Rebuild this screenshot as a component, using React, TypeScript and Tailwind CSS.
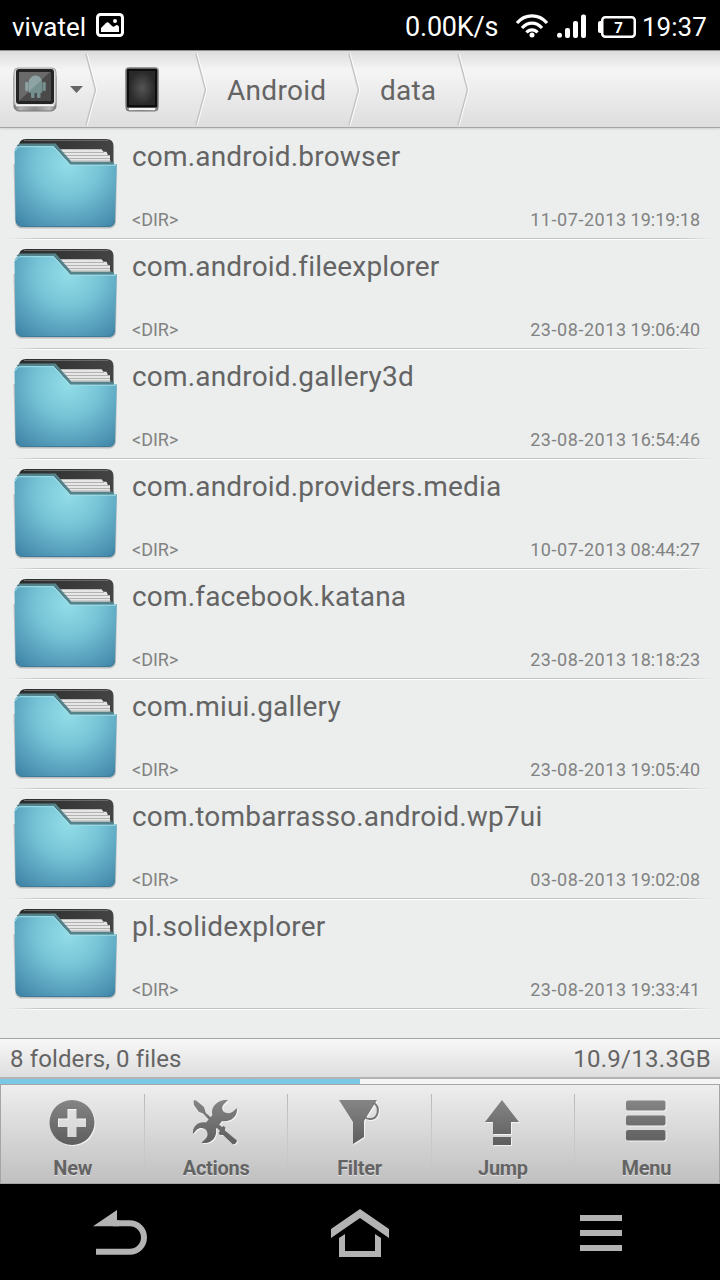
import type { ReactNode } from "react";

interface Folder {
  name: string;
  date: string;
  time: string;
}

const FOLDERS: Folder[] = [
  { name: "com.android.browser", date: "11-07-2013", time: "19:19:18" },
  { name: "com.android.fileexplorer", date: "23-08-2013", time: "19:06:40" },
  { name: "com.android.gallery3d", date: "23-08-2013", time: "16:54:46" },
  { name: "com.android.providers.media", date: "10-07-2013", time: "08:44:27" },
  { name: "com.facebook.katana", date: "23-08-2013", time: "18:18:23" },
  { name: "com.miui.gallery", date: "23-08-2013", time: "19:05:40" },
  { name: "com.tombarrasso.android.wp7ui", date: "03-08-2013", time: "19:02:08" },
  { name: "pl.solidexplorer", date: "23-08-2013", time: "19:33:41" },
];

// Gradients shared by all the icons on the page
function IconDefs() {
  return (
    <svg className="absolute h-0 w-0" aria-hidden="true">
      <defs>
        <radialGradient id="folder-front" gradientUnits="userSpaceOnUse" cx="68" cy="34" r="78">
          <stop offset="0" stopColor="#93dde8" />
          <stop offset="0.4" stopColor="#78c5d7" />
          <stop offset="0.75" stopColor="#579fbc" />
          <stop offset="1" stopColor="#4084a6" />
        </radialGradient>
        <linearGradient id="folder-back" x1="0" y1="0" x2="1" y2="0">
          <stop offset="0" stopColor="#2b2b2b" />
          <stop offset="1" stopColor="#444" />
        </linearGradient>
        <linearGradient id="tool" gradientUnits="userSpaceOnUse" x1="0" y1="0" x2="0" y2="46">
          <stop offset="0" stopColor="#858585" />
          <stop offset="1" stopColor="#5c5c5c" />
        </linearGradient>
        <linearGradient id="metal" x1="0" y1="0" x2="1" y2="0">
          <stop offset="0" stopColor="#777" />
          <stop offset="0.15" stopColor="#b4b4b4" />
          <stop offset="0.5" stopColor="#8d8d8d" />
          <stop offset="0.85" stopColor="#bcbcbc" />
          <stop offset="1" stopColor="#777" />
        </linearGradient>
        <radialGradient id="screen">
          <stop offset="0" stopColor="#555" />
          <stop offset="1" stopColor="#292929" />
        </radialGradient>
      </defs>
    </svg>
  );
}

function StatusBar() {
  return (
    <div className="flex h-[50px] shrink-0 items-center bg-black px-3 leading-[50px] text-white">
      <span className="w-[84px] pt-[3px] text-[26px] whitespace-nowrap">vivatel</span>
      <svg className="h-6 w-7" viewBox="0 0 28 24">
        <rect x="1.5" y="1.5" width="25" height="21" rx="3" fill="none" stroke="#fff" strokeWidth="3" />
        <path d="M5 19v-4l5-5c1-1 2-1 3 0l3 3c1 1 2 1 3 0 2-2 3-1 4 1v5z" fill="#fff" />
        <circle cx="19" cy="8" r="2" fill="#fff" />
      </svg>
      <span className="ml-auto w-[111px] pt-[3px] text-[27px] tracking-[-0.2px] whitespace-nowrap">0.00K/s</span>
      <svg className="mt-0.5 h-6 w-8" viewBox="0 0 32 24">
        <g fill="none" stroke="#fff" strokeWidth="3.2">
          <path d="M1 9C9-.5 23-.5 31 9" />
          <path d="M6 14c6-6.500 14-6.500 20 0" />
          <path d="M10.500 18.500c3-3.500 8-3.500 11 0" />
        </g>
        <circle cx="16" cy="21" r="2.500" fill="#fff" />
      </svg>
      <svg className="mt-0.5 ml-[9px] h-6 w-[29px]" viewBox="0 0 29 24">
        <g fill="#fff">
          <circle cx="2.500" cy="21.200" r="2.500" />
          <rect x="8" y="14" width="5" height="10" rx="2" />
          <rect x="16" y="7" width="5" height="17" rx="2" />
          <rect x="24" y="0.500" width="5" height="23.500" rx="2" />
        </g>
      </svg>
      <svg className="mt-[3px] ml-3 h-[22px] w-[38px]" viewBox="0 0 38 22">
        <rect x="4.250" y="1.250" width="32.500" height="19.500" rx="3" fill="none" stroke="#fff" strokeWidth="2.500" />
        <path d="M4 5H2a2 2 0 00-2 2v8a2 2 0 002 2h2z" fill="#fff" />
        <text x="20.500" y="16.500" textAnchor="middle" fill="#fff" fontSize="15" fontWeight="700">7</text>
      </svg>
      <span className="ml-1.5 w-[66px] pt-[3px] text-[26px] whitespace-nowrap">19:37</span>
    </div>
  );
}

function Chevron() {
  return (
    <svg className="h-[74px] w-3 shrink-0" viewBox="0 0 12 74" fill="none">
      <path d="M2 2l9.500 36L2 73" stroke="#fff" strokeWidth="1.500" />
      <path d="M1 2l9.500 36L1 73" stroke="#c4c4c4" strokeWidth="1.500" />
    </svg>
  );
}

function Breadcrumbs() {
  return (
    <div className="flex h-[78px] shrink-0 items-center border-t border-b border-t-[#8c8c8c] border-b-[#a5a5a5] bg-linear-to-b from-[#dcdcdc] via-[#f5f5f5] via-25% to-[#dedede] pl-[13px] text-[28px] text-[#646464] shadow-[0_1px_2px_rgba(0,0,0,0.12)]">
      <svg className="mt-0.5 h-[46px] w-[44px] shrink-0" viewBox="0 0 44 46">
        <rect x="1" y="5" width="42" height="39" rx="5" fill="url(#metal)" stroke="#777" />
        <rect x="1" y="1" width="42" height="38" rx="4" fill="#dadada" stroke="#a2a2a2" />
        <path d="M3 38.500h38" stroke="#f6f6f6" strokeWidth="1.500" />
        <rect x="3" y="2" width="38" height="35" rx="3" fill="#242424" />
        <rect x="6" y="5" width="32" height="29" fill="#4a4a4a" />
        <g fill="#769090">
          <path d="M15.500 16a7 7.500 0 0114 0zM15.500 16h14v8a2 2 0 01-2 2h-10a2 2 0 01-2-2z" />
          <rect x="12.200" y="15" width="3" height="9" rx="1.200" />
          <rect x="29.800" y="15" width="3" height="9" rx="1.200" />
          <rect x="18" y="25" width="3.500" height="6" rx="1" />
          <rect x="24" y="25" width="3.500" height="6" rx="1" />
        </g>
        <path d="M6 5h31L6 34z" fill="#fff" opacity="0.18" />
      </svg>
      <svg className="ml-[13px] h-[7px] w-[13px] shrink-0" viewBox="0 0 13 7">
        <path d="M0 0h13L6.500 7z" fill="#666" />
      </svg>
      <div className="ml-0.5"><Chevron /></div>
      <svg className="mt-px ml-[28px] h-[46px] w-[34px] shrink-0" viewBox="0 0 34 46">
        <rect x="1" y="5" width="32" height="39" rx="3" fill="url(#metal)" stroke="#777" />
        <rect x="4" y="40" width="26" height="3" fill="#f4f4f4" />
        <rect x="0.500" y="0.500" width="33" height="40" rx="3" fill="#c4c4c4" stroke="#999" />
        <rect x="1.500" y="1.500" width="31" height="39" rx="1.500" fill="#0e0e0e" />
        <rect x="4" y="4" width="26" height="34" fill="url(#screen)" />
      </svg>
      <div className="ml-9"><Chevron /></div>
      <span className="ml-[20px] w-[101px] pt-[3px] tracking-[0.3px] whitespace-nowrap">Android</span>
      <div className="ml-5"><Chevron /></div>
      <span className="ml-[20px] w-[57px] pt-[3px] tracking-[0.2px] whitespace-nowrap">data</span>
      <div className="ml-5"><Chevron /></div>
    </div>
  );
}

function FolderIcon() {
  return (
    <svg className="h-[108px] w-[132px] shrink-0" viewBox="0 0 132 108">
      <path d="M13.500 34h103.500l-1 58a7 7 0 01-7 6.500H22a7 7 0 01-7-6.500z" fill="#000" opacity="0.2" />
      <path d="M19 16q0-7 7-7h80q7.500 0 7.500 7v24H19z" fill="url(#folder-back)" />
      <path d="M24 10.500h84" stroke="#686868" />
      <path d="M59 19.200h42.500l2 2.500h3l1.500 3.500h2v7H70z" fill="#e6e6e6" />
      <path d="M62 22.500h42M65 25.500h44M67 28.500h43M69 31h42" stroke="#a5a5a5" strokeWidth="0.800" />
      <path d="M17.500 16.500q1.500-1.800 4-1.800H55L71 33h43" fill="none" stroke="#55838c" strokeWidth="2.500" />
      <path d="M21 16h33l16.500 18.500h46.300L115 91q-.4 6-7 6H23q-7 0-7.500-7L14.500 22q0-6 6.500-6z" fill="url(#folder-front)" />
      <path d="M15.500 21q1-4.300 5.500-4.300h32.500L70 35.200h46" fill="none" stroke="#9fe0ea" />
      <path d="M16.500 91q1 5.500 7 5.500h84q6 0 7-6" fill="none" stroke="#3d7b98" />
    </svg>
  );
}

function FolderRow({ folder }: { folder: Folder }) {
  return (
    <li className="h-[110px]">
      <div className="flex h-[108px]">
        <FolderIcon />
        <div className="flex min-w-0 flex-1 flex-col justify-between pt-[11px] pr-5 pb-[7px]">
          <span className="text-[28px] leading-8 tracking-[0.18px] whitespace-nowrap text-[#646464]">{folder.name}</span>
          <div className="flex items-center text-[18px] leading-[22px] whitespace-nowrap text-[#828282]">
            <span className="mr-auto">&lt;DIR&gt;</span>
            <span className="tracking-[0.55px]">{folder.date}</span>
            <span className="ml-1">{folder.time}</span>
          </div>
        </div>
      </div>
      <div className="mx-2 h-px bg-[linear-gradient(90deg,transparent,#bfc1c0_5%,#bfc1c0_95%,transparent)]" />
      <div className="mx-2 h-px bg-[linear-gradient(90deg,transparent,#fff_5%,#fff_95%,transparent)]" />
    </li>
  );
}

function StorageBar() {
  return (
    <>
      <div className="flex h-[39px] shrink-0 items-center justify-between border-t border-[#a5a5a5] bg-linear-to-b from-[#f8f8f8] to-[#dedede] px-2.5 pt-0.5 text-[24px] text-[#646464]">
        <span className="tracking-[0.12px]">8 folders, 0 files</span>
        <span className="-mr-px tracking-[0.27px]">10.9/13.3GB</span>
      </div>
      <div className="h-[7px] shrink-0 border-t-2 border-[#b4b4b4] bg-[#f5f5f5]">
        <div className="h-full w-1/2 bg-[#7bc8e6]" />
      </div>
    </>
  );
}

function ToolButton({ label, children }: { label: string; children: ReactNode }) {
  return (
    <button className="relative flex flex-1 flex-col items-center pt-[15px] text-[20px] leading-6 font-bold text-[#646464] [text-shadow:0_1px_0_rgba(255,255,255,0.5)] not-first:before:absolute not-first:before:top-[9px] not-first:before:left-[0.5px] not-first:before:h-20 not-first:before:w-px not-first:before:bg-linear-to-b not-first:before:from-[#b8b8b8] not-first:before:to-transparent">
      <svg className="h-[46px] w-[46px] overflow-visible drop-shadow-[1px_1px_0_rgba(255,255,255,0.7)]" viewBox="0 0 46 46" fill="url(#tool)">
        {children}
      </svg>
      <span className="mt-[10px] ml-0.5 tracking-[-0.3px]">{label}</span>
    </button>
  );
}

function Toolbar() {
  return (
    <div className="flex h-[100px] shrink-0 border-y border-[#a5a5a5] bg-linear-to-b from-[#eeeeee] to-[#c0c0c0] pr-[3px] shadow-[inset_1px_0_0_#a5a5a5,inset_-1px_0_0_#a5a5a5]">
      <ToolButton label="New">
        <path fillRule="evenodd" d="M23 0a22.500 22.500 0 110 45 22.500 22.500 0 010-45zM18.500 9v9.500H9V27h9.500v10h9V27H37v-8.500h-9.500V9z" />
      </ToolButton>
      <ToolButton label="Actions">
        <path d="M1.500 0.500Q4-.5 6 2l6 5 2 6 9 8 7 6 1.500-1 2 1.500-.5 3L45 40.500q-.5 3.500-4 4L31 35l-3 0-1.500-2 1.500-2-9-9-8-8.500L7 12 2 5z" />
        <path d="M36 0C26-1 18 7 20.500 15L14 22.500C7 21 0 26 1 34l3.500-4c3-3 8-2.500 10 .500 2 4 1 6-1 8.500l-4 3.500C18 45 25.500 38 24 29l6-8c8 1.500 16-4 15-13l-4 3.500c-3 2.500-7 2-9.500 0-2-2-1.500-5 0-7z" />
      </ToolButton>
      <ToolButton label="Filter">
        <path d="M3 0h38L28 21v16l-11 7V22z" />
        <path d="M38 3c6 4 5 15-3 16-3 .5-5-.5-6.500-2.500" fill="none" stroke="#777" strokeWidth="2" />
      </ToolButton>
      <ToolButton label="Jump">
        <path d="M23 0l17 22h-8v12H14V22H6zM14 37h18v8H14z" />
      </ToolButton>
      <ToolButton label="Menu">
        <rect x="4" y="0.500" width="39.500" height="10" rx="2" />
        <rect x="4" y="15.500" width="39.500" height="10" rx="2" />
        <rect x="4" y="30" width="39.500" height="10.500" rx="2" />
      </ToolButton>
    </div>
  );
}

function NavBar() {
  return (
    <div className="grid h-24 shrink-0 grid-cols-3 items-center justify-items-center bg-black pt-0.5">
      <svg className="h-[46px] w-[54px]" viewBox="0 0 54 46" fill="none">
        <path d="M0 16.250L24 0v10.250h2v6z" fill="#b3b3b3" />
        <path d="M20 13.250h16.700a14.300 14.300 0 010 28.600H3" stroke="#b3b3b3" strokeWidth="6" />
      </svg>
      <svg className="h-12 w-[58px]" viewBox="0 0 58 48" fill="#b3b3b3">
        <path d="M29 0l29 20v9L29 9 0 29v-9z" />
        <path d="M8 29l6-4v17h30V25l6 4v19H8z" />
      </svg>
      <div className="ml-0.5 flex w-[42px] flex-col gap-[9px]">
        <div className="h-1.5 bg-[#b3b3b3]" />
        <div className="h-1.5 bg-[#b3b3b3]" />
        <div className="h-1.5 bg-[#b3b3b3]" />
      </div>
    </div>
  );
}

export default function App() {
  return (
    <div className="flex h-[1280px] w-[720px] flex-col overflow-hidden bg-[#ebeeed] font-[Roboto,sans-serif]">
      <IconDefs />
      <StatusBar />
      <Breadcrumbs />
      <ul className="min-h-0 flex-1 pt-0.5">
        {FOLDERS.map((folder) => (
          <FolderRow key={folder.name} folder={folder} />
        ))}
      </ul>
      <StorageBar />
      <Toolbar />
      <NavBar />
    </div>
  );
}
